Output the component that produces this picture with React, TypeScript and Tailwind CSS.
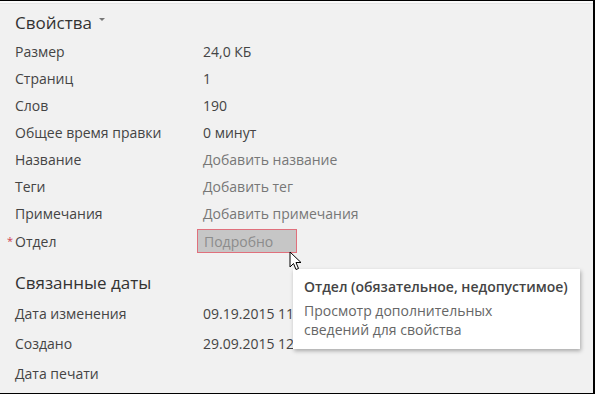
import React from "react";

const font = { fontFamily: '"Open Sans", "Noto Sans", sans-serif' };

type Row = { label: string; value?: string; muted?: boolean };

const props: Row[] = [
  { label: "Размер", value: "24,0 КБ" },
  { label: "Страниц", value: "1" },
  { label: "Слов", value: "190" },
  { label: "Общее время правки", value: "0 минут" },
  { label: "Название", value: "Добавить название", muted: true },
  { label: "Теги", value: "Добавить тег", muted: true },
  { label: "Примечания", value: "Добавить примечания", muted: true },
];

const dates: Row[] = [
  { label: "Дата изменения", value: "09.19.2015 11:42" },
  { label: "Создано", value: "29.09.2015 12:10" },
  { label: "Дата печати" },
];

function Cursor() {
  return (
    <svg width="13" height="20" viewBox="0 0 13 20" className="absolute left-[289px] top-[250px]">
      <path d="M1 1 L1 16 L4.5 12.5 L7 18.5 L9.5 17.5 L7 11.5 L12 11.5 Z" fill="#fff" stroke="#000" strokeWidth="1" strokeLinejoin="round" />
    </svg>
  );
}

export default function App() {
  return (
    <div className="relative w-[595px] h-[394px] overflow-hidden bg-[#f1f1f1] border-t border-b border-r-2 border-black" style={font}>
      <div className="h-[3px] bg-[#fafafa] border-b border-[#e6e6e6]" />
      <div className="pl-[15px] pt-[5px] text-[14px] text-[#444]">
        <div className="flex items-center h-[27px] text-[17px] text-[#333]">
          Свойства
          <span className="ml-[7px] mb-[6px] w-0 h-0 border-l-[3px] border-r-[3px] border-t-[3px] border-l-transparent border-r-transparent border-t-[#777]" />
        </div>
        <div className="grid grid-cols-[188px_1fr] mt-[2px]">
          {props.map((r) => (
            <React.Fragment key={r.label}>
              <div className="h-[27px] flex items-center">{r.label}</div>
              <div className={"h-[27px] flex items-center " + (r.muted ? "text-[#777]" : "text-[#444]")}>{r.value}</div>
            </React.Fragment>
          ))}
          <div className="relative h-[28px] flex items-center">
            <span className="absolute -left-[8px] top-[6px] text-[#d04050] text-[11px]">*</span>
            Отдел
          </div>
          <div className="h-[28px] flex items-center">
            <span className="-ml-[6px] w-[100px] h-[24px] flex items-center pl-[6px] bg-[#c6c6c6] border border-[#e0707c] text-[#8c8c8c]">
              Подробно
            </span>
          </div>
        </div>
        <div className="flex items-center h-[30px] mt-[13px] text-[17px] text-[#333]">Связанные даты</div>
        <div className="grid grid-cols-[188px_1fr]">
          {dates.map((r) => (
            <React.Fragment key={r.label}>
              <div className="h-[30px] flex items-center">{r.label}</div>
              <div className="h-[30px] flex items-center whitespace-nowrap">{r.value}</div>
            </React.Fragment>
          ))}
        </div>
      </div>

      <div className="absolute left-[293px] top-[268px] w-[287px] h-[80px] bg-white shadow-[1px_2px_4px_rgba(0,0,0,0.3)] px-[11px] pt-[8px]">
        <div className="text-[14px] font-semibold text-[#444] leading-[20px]">Отдел (обязательное, недопустимое)</div>
        <div className="mt-[4px] text-[14px] text-[#666] leading-[19px]">
          Просмотр дополнительных
          <br />
          сведений для свойства
        </div>
      </div>
      <Cursor />
    </div>
  );
}
